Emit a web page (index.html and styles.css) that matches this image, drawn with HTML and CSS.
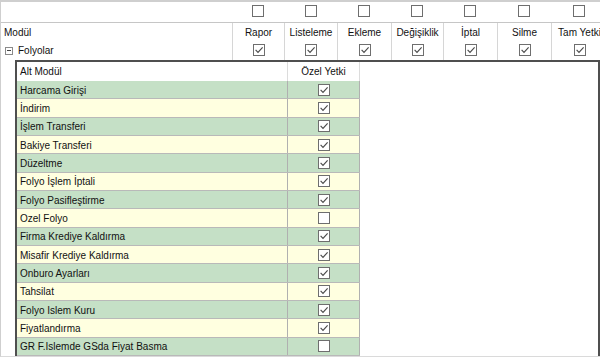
FILE: index.html
```html
<!DOCTYPE html>
<html>
<head>
<meta charset="utf-8">
<link rel="stylesheet" href="styles.css">
</head>
<body>
<div class="frame">
  <div class="grid toprow">
    <div></div>
    <div class="tcell"><svg class="cb big" viewBox="0 0 12 12"><rect x=".5" y=".5" width="11" height="11" fill="#fff" stroke="#6e6e6e"/></svg></div>
    <div class="tcell"><svg class="cb big" viewBox="0 0 12 12"><rect x=".5" y=".5" width="11" height="11" fill="#fff" stroke="#6e6e6e"/></svg></div>
    <div class="tcell"><svg class="cb big" viewBox="0 0 12 12"><rect x=".5" y=".5" width="11" height="11" fill="#fff" stroke="#6e6e6e"/></svg></div>
    <div class="tcell"><svg class="cb big" viewBox="0 0 12 12"><rect x=".5" y=".5" width="11" height="11" fill="#fff" stroke="#6e6e6e"/></svg></div>
    <div class="tcell"><svg class="cb big" viewBox="0 0 12 12"><rect x=".5" y=".5" width="11" height="11" fill="#fff" stroke="#6e6e6e"/></svg></div>
    <div class="tcell"><svg class="cb big" viewBox="0 0 12 12"><rect x=".5" y=".5" width="11" height="11" fill="#fff" stroke="#6e6e6e"/></svg></div>
    <div class="tcell"><svg class="cb big" viewBox="0 0 12 12"><rect x=".5" y=".5" width="11" height="11" fill="#fff" stroke="#6e6e6e"/></svg></div>
  </div>
  <div class="grid headrow">
    <div class="modcell">
      <div class="lbl left">Modül</div>
      <div class="tree"><span class="minus"></span><span>Folyolar</span></div>
    </div>
    <div class="hcell"><div class="lbl">Rapor</div><svg class="cb" viewBox="0 0 12 12"><rect x=".5" y=".5" width="11" height="11" fill="#fff" stroke="#6e6e6e"/><path d="M2.6 5.8l2.4 2.5 4.6-5" fill="none" stroke="#4a4a4a" stroke-width="1.15"/></svg></div>
    <div class="hcell"><div class="lbl">Listeleme</div><svg class="cb" viewBox="0 0 12 12"><rect x=".5" y=".5" width="11" height="11" fill="#fff" stroke="#6e6e6e"/><path d="M2.6 5.8l2.4 2.5 4.6-5" fill="none" stroke="#4a4a4a" stroke-width="1.15"/></svg></div>
    <div class="hcell"><div class="lbl">Ekleme</div><svg class="cb" viewBox="0 0 12 12"><rect x=".5" y=".5" width="11" height="11" fill="#fff" stroke="#6e6e6e"/><path d="M2.6 5.8l2.4 2.5 4.6-5" fill="none" stroke="#4a4a4a" stroke-width="1.15"/></svg></div>
    <div class="hcell"><div class="lbl">Değişiklik</div><svg class="cb" viewBox="0 0 12 12"><rect x=".5" y=".5" width="11" height="11" fill="#fff" stroke="#6e6e6e"/><path d="M2.6 5.8l2.4 2.5 4.6-5" fill="none" stroke="#4a4a4a" stroke-width="1.15"/></svg></div>
    <div class="hcell"><div class="lbl">İptal</div><svg class="cb" viewBox="0 0 12 12"><rect x=".5" y=".5" width="11" height="11" fill="#fff" stroke="#6e6e6e"/><path d="M2.6 5.8l2.4 2.5 4.6-5" fill="none" stroke="#4a4a4a" stroke-width="1.15"/></svg></div>
    <div class="hcell"><div class="lbl">Silme</div><svg class="cb" viewBox="0 0 12 12"><rect x=".5" y=".5" width="11" height="11" fill="#fff" stroke="#6e6e6e"/><path d="M2.6 5.8l2.4 2.5 4.6-5" fill="none" stroke="#4a4a4a" stroke-width="1.15"/></svg></div>
    <div class="hcell"><div class="lbl">Tam Yetki</div><svg class="cb" viewBox="0 0 12 12"><rect x=".5" y=".5" width="11" height="11" fill="#fff" stroke="#6e6e6e"/><path d="M2.6 5.8l2.4 2.5 4.6-5" fill="none" stroke="#4a4a4a" stroke-width="1.15"/></svg></div>
  </div>
  <div class="inner">
    <div class="sub">
      <div class="subhead"><div class="name">Alt Modül</div><div class="val">Özel Yetki</div></div>
      <div class="row g"><div class="name">Harcama Girişi</div><div class="val"><svg class="cb" viewBox="0 0 12 12"><rect x=".5" y=".5" width="11" height="11" fill="#fff" stroke="#6e6e6e"/><path d="M2.6 5.8l2.4 2.5 4.6-5" fill="none" stroke="#4a4a4a" stroke-width="1.15"/></svg></div></div>
      <div class="row y"><div class="name">İndirim</div><div class="val"><svg class="cb" viewBox="0 0 12 12"><rect x=".5" y=".5" width="11" height="11" fill="#fff" stroke="#6e6e6e"/><path d="M2.6 5.8l2.4 2.5 4.6-5" fill="none" stroke="#4a4a4a" stroke-width="1.15"/></svg></div></div>
      <div class="row g"><div class="name">İşlem Transferi</div><div class="val"><svg class="cb" viewBox="0 0 12 12"><rect x=".5" y=".5" width="11" height="11" fill="#fff" stroke="#6e6e6e"/><path d="M2.6 5.8l2.4 2.5 4.6-5" fill="none" stroke="#4a4a4a" stroke-width="1.15"/></svg></div></div>
      <div class="row y"><div class="name">Bakiye Transferi</div><div class="val"><svg class="cb" viewBox="0 0 12 12"><rect x=".5" y=".5" width="11" height="11" fill="#fff" stroke="#6e6e6e"/><path d="M2.6 5.8l2.4 2.5 4.6-5" fill="none" stroke="#4a4a4a" stroke-width="1.15"/></svg></div></div>
      <div class="row g"><div class="name">Düzeltme</div><div class="val"><svg class="cb" viewBox="0 0 12 12"><rect x=".5" y=".5" width="11" height="11" fill="#fff" stroke="#6e6e6e"/><path d="M2.6 5.8l2.4 2.5 4.6-5" fill="none" stroke="#4a4a4a" stroke-width="1.15"/></svg></div></div>
      <div class="row y"><div class="name">Folyo İşlem İptali</div><div class="val"><svg class="cb" viewBox="0 0 12 12"><rect x=".5" y=".5" width="11" height="11" fill="#fff" stroke="#6e6e6e"/><path d="M2.6 5.8l2.4 2.5 4.6-5" fill="none" stroke="#4a4a4a" stroke-width="1.15"/></svg></div></div>
      <div class="row g"><div class="name">Folyo Pasifleştirme</div><div class="val"><svg class="cb" viewBox="0 0 12 12"><rect x=".5" y=".5" width="11" height="11" fill="#fff" stroke="#6e6e6e"/><path d="M2.6 5.8l2.4 2.5 4.6-5" fill="none" stroke="#4a4a4a" stroke-width="1.15"/></svg></div></div>
      <div class="row y"><div class="name">Ozel Folyo</div><div class="val"><svg class="cb" viewBox="0 0 12 12"><rect x=".5" y=".5" width="11" height="11" fill="#fff" stroke="#6e6e6e"/></svg></div></div>
      <div class="row g"><div class="name">Firma Krediye Kaldırma</div><div class="val"><svg class="cb" viewBox="0 0 12 12"><rect x=".5" y=".5" width="11" height="11" fill="#fff" stroke="#6e6e6e"/><path d="M2.6 5.8l2.4 2.5 4.6-5" fill="none" stroke="#4a4a4a" stroke-width="1.15"/></svg></div></div>
      <div class="row y"><div class="name">Misafir Krediye Kaldırma</div><div class="val"><svg class="cb" viewBox="0 0 12 12"><rect x=".5" y=".5" width="11" height="11" fill="#fff" stroke="#6e6e6e"/><path d="M2.6 5.8l2.4 2.5 4.6-5" fill="none" stroke="#4a4a4a" stroke-width="1.15"/></svg></div></div>
      <div class="row g"><div class="name">Onburo Ayarları</div><div class="val"><svg class="cb" viewBox="0 0 12 12"><rect x=".5" y=".5" width="11" height="11" fill="#fff" stroke="#6e6e6e"/><path d="M2.6 5.8l2.4 2.5 4.6-5" fill="none" stroke="#4a4a4a" stroke-width="1.15"/></svg></div></div>
      <div class="row y"><div class="name">Tahsilat</div><div class="val"><svg class="cb" viewBox="0 0 12 12"><rect x=".5" y=".5" width="11" height="11" fill="#fff" stroke="#6e6e6e"/><path d="M2.6 5.8l2.4 2.5 4.6-5" fill="none" stroke="#4a4a4a" stroke-width="1.15"/></svg></div></div>
      <div class="row g"><div class="name">Folyo Islem Kuru</div><div class="val"><svg class="cb" viewBox="0 0 12 12"><rect x=".5" y=".5" width="11" height="11" fill="#fff" stroke="#6e6e6e"/><path d="M2.6 5.8l2.4 2.5 4.6-5" fill="none" stroke="#4a4a4a" stroke-width="1.15"/></svg></div></div>
      <div class="row y"><div class="name">Fiyatlandırma</div><div class="val"><svg class="cb" viewBox="0 0 12 12"><rect x=".5" y=".5" width="11" height="11" fill="#fff" stroke="#6e6e6e"/><path d="M2.6 5.8l2.4 2.5 4.6-5" fill="none" stroke="#4a4a4a" stroke-width="1.15"/></svg></div></div>
      <div class="row g"><div class="name">GR F.Islemde GSda Fiyat Basma</div><div class="val"><svg class="cb" viewBox="0 0 12 12"><rect x=".5" y=".5" width="11" height="11" fill="#fff" stroke="#6e6e6e"/></svg></div></div>
    </div>
  </div>
</div>
</body>
</html>
```
FILE: styles.css
```css
html, body {
  margin: 0;
  padding: 0;
  background: #fff;
}
body {
  font-family: "Liberation Sans", Arial, sans-serif;
  font-size: 10px;
  color: #111;
}
.frame {
  width: 600px;
  height: 357px;
  box-sizing: border-box;
  border-top: 2px solid #cfcfcf;
  border-left: 1px solid #cfcfcf;
  border-bottom: 1px solid #dadada;
  overflow: hidden;
  display: flex;
  flex-direction: column;
}
.grid {
  display: grid;
  grid-template-columns: 231px 52px 53px 54px 52px 54px 54px 56px;
}
.toprow {
  height: 20px;
  border-bottom: 1px solid #c6c6c6;
  flex: none;
}
.tcell {
  display: flex;
  justify-content: center;
  padding-top: 3px;
}
.cb {
  width: 12px;
  height: 12px;
  display: block;
}
.headrow {
  height: 37px;
  flex: none;
}
.hcell {
  border-left: 1px solid #d6d6d6;
  display: flex;
  flex-direction: column;
  align-items: center;
  padding-top: 4px;
  white-space: nowrap;
}
.lbl {
  height: 12px;
  line-height: 12px;
  margin-bottom: 5px;
}
.lbl.left {
  padding-left: 3px;
  margin-bottom: 5px;
}
.modcell {
  padding-top: 4px;
}
.tree {
  display: flex;
  align-items: center;
  height: 13px;
  padding-left: 4px;
}
.minus {
  width: 8px;
  height: 8px;
  box-sizing: border-box;
  border: 1px solid #8a8a8a;
  margin-right: 5px;
  display: flex;
  align-items: center;
  justify-content: center;
}
.minus::after {
  content: "";
  width: 4px;
  height: 1px;
  background: #444;
}
.inner {
  flex: 1;
  margin-left: 14px;
  border-left: 2px solid #4f4f4f;
  border-top: 2px solid #4f4f4f;
  border-right: 2px solid #4f4f4f;
  min-height: 0;
}
.sub {
  width: 343px;
}
.subhead {
  height: 19px;
  display: flex;
  align-items: center;
}
.subhead .name,
.row .name {
  width: 271px;
  box-sizing: border-box;
  padding-left: 3px;
  border-right: 1px solid #dcdcdc;
  height: 100%;
  display: flex;
  align-items: center;
  white-space: nowrap;
}
.subhead .val,
.row .val {
  width: 72px;
  box-sizing: border-box;
  border-right: 1px solid #dcdcdc;
  height: 100%;
  display: flex;
  align-items: center;
  justify-content: center;
}
.row {
  height: 18.33px;
  box-sizing: border-box;
  border-bottom: 1px solid #b9b9b9;
  display: flex;
}
.row .name,
.row .val {
  border-right-color: #b0b0b0;
}
.row .name {
  padding-top: 1px;
}
.row.g {
  background: #c5e0c6;
}
.row.y {
  background: #ffffe0;
}
```
